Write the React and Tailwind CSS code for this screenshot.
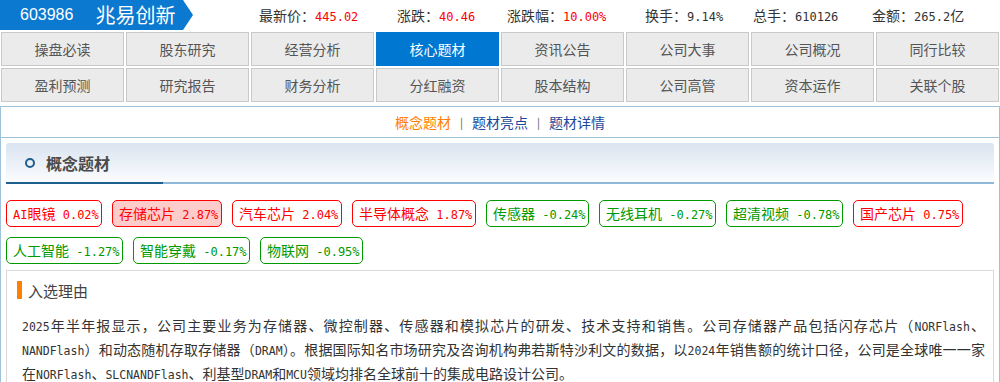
import React from 'react';

const navRows = [
  ['操盘必读', '股东研究', '经营分析', '核心题材', '资讯公告', '公司大事', '公司概况', '同行比较'],
  ['盈利预测', '研究报告', '财务分析', '分红融资', '股本结构', '公司高管', '资本运作', '关联个股'],
];

const stats = [
  { label: '最新价：', value: '445.02', red: true, w: 'w-[138px]' },
  { label: '涨跌：', value: '40.46', red: true, w: 'w-[110px]' },
  { label: '涨跌幅：', value: '10.00%', red: true, w: 'w-[138px]' },
  { label: '换手：', value: '9.14%', w: 'w-[108px]' },
  { label: '总手：', value: '610126', w: 'w-[119px]' },
  { label: '金额：', value: '265.2亿', w: 'w-[110px]' },
];

const tags = [
  { name: 'AI眼镜', pct: '0.02%', up: true, w: 'w-[96px]' },
  { name: '存储芯片', pct: '2.87%', up: true, hot: true, w: 'w-[110px]' },
  { name: '汽车芯片', pct: '2.04%', up: true, w: 'w-[110px]' },
  { name: '半导体概念', pct: '1.87%', up: true, w: 'w-[124px]' },
  { name: '传感器', pct: '-0.24%', w: 'w-[103px]' },
  { name: '无线耳机', pct: '-0.27%', w: 'w-[117px]' },
  { name: '超清视频', pct: '-0.78%', w: 'w-[117px]' },
  { name: '国产芯片', pct: '0.75%', up: true, w: 'w-[110px]' },
  { name: '人工智能', pct: '-1.27%', w: 'w-[117px]' },
  { name: '智能穿戴', pct: '-0.17%', w: 'w-[117px]' },
  { name: '物联网', pct: '-0.95%', w: 'w-[103px]' },
];

const reasonLines = [
  '2025年半年报显示，公司主要业务为存储器、微控制器、传感器和模拟芯片的研发、技术支持和销售。公司存储器产品包括闪存芯片（NORFlash、',
  'NANDFlash）和动态随机存取存储器（DRAM）。根据国际知名市场研究及咨询机构弗若斯特沙利文的数据，以2024年销售额的统计口径，公司是全球唯一一家',
  '在NORFlash、SLCNANDFlash、利基型DRAM和MCU领域均排名全球前十的集成电路设计公司。',
];

// ascii runs get the monospace font, like the original page's SimSun digits
const Mixed = ({ text, monoClass }) => (
  <span>
    {text.split(/([\x20-\x7E]+)/).map((part, i) =>
      /^[\x20-\x7E]+$/.test(part) ? (
        <span key={i} className={monoClass}>{part}</span>
      ) : (
        part
      )
    )}
  </span>
);

const MONO = "font-['DejaVu_Sans_Mono',monospace] text-[12px]";
const MONO_SM = "font-['DejaVu_Sans_Mono',monospace] text-[11.5px]";

const App = () => {
  return (
    <div className="w-[1000px] bg-white font-['Noto_Sans_CJK_SC',sans-serif] text-[#333]">
      {/* Top bar */}
      <div className="flex h-[30px] items-center">
        <div className="flex items-center">
          <div className="flex h-[30px] w-[183px] items-center bg-[#0b79d0] pl-[20px] text-white">
            <span className="font-['Liberation_Sans',sans-serif] text-[16px] leading-none">603986</span>
            <span className="ml-[22px] text-[20px] leading-none">兆易创新</span>
          </div>
          <div className="h-0 w-0 border-y-[15px] border-l-[10px] border-y-transparent border-l-[#0b79d0]" />
        </div>
        <div className="ml-[66px] flex items-center">
          {stats.map(s => (
            <div key={s.label} className={`${s.w} flex items-center text-[14px] leading-none`}>
              <span className="text-[#333]">{s.label}</span>
              <span className={s.red ? 'text-[#ff0000]' : 'text-[#333]'}>
                <Mixed text={s.value} monoClass={MONO} />
              </span>
            </div>
          ))}
        </div>
      </div>

      {/* Tab grid */}
      <div className="grid grid-cols-8 gap-[2px] px-[1px] pt-[2px]">
        {navRows.flat().map(label => {
          const active = label === '核心题材';
          return (
            <div
              key={label}
              className={
                active
                  ? 'flex h-[34px] items-center justify-center border border-[#0078d2] bg-[#0078d2] text-[14px] text-white'
                  : 'flex h-[34px] items-center justify-center border border-[#c9c9c9] bg-[#ebebeb] text-[14px] text-[#555]'
              }
            >
              {label}
            </div>
          );
        })}
      </div>

      {/* Content panel */}
      <div className="mt-[4px] border border-[#9fc2dc]">
        <div className="flex h-[31px] items-center justify-center border-b border-[#9fc2dc] text-[14px]">
          <span className="text-[#ff7e00]">概念题材</span>
          <span className="mx-[9px] text-[11px] text-[#555]">|</span>
          <span className="text-[#1b4a9c]">题材亮点</span>
          <span className="mx-[9px] text-[11px] text-[#555]">|</span>
          <span className="text-[#1b4a9c]">题材详情</span>
        </div>

        <div className="px-[5px] pb-[20px]">
          {/* Section header */}
          <div className="mt-[5px]">
            <div className="flex h-[39px] items-center rounded-t-[3px] bg-gradient-to-b from-[#dae4f0] to-[#fbfcfe] pl-[19px]">
              <span className="h-[10px] w-[10px] rounded-full border-2 border-[#1d5f8e]" />
              <span className="ml-[11px] text-[16px] font-bold text-[#4a4a4a]">概念题材</span>
            </div>
            <div className="flex h-[2px]">
              <div className="w-[157px] bg-[#1d5f8e]" />
              <div className="flex-1 bg-[#8fb9d8]" />
            </div>
          </div>

          {/* Concept tags */}
          <div className="mt-[16px] flex flex-wrap gap-x-[10px] gap-y-[10px]">
            {tags.map(t => (
              <div
                key={t.name}
                className={`${t.w} flex h-[27px] items-center whitespace-nowrap rounded-[5px] border pl-[6px] text-[14px] leading-none ${
                  t.up ? 'border-[#ff0000] text-[#ff0000]' : 'border-[#009900] text-[#009900]'
                } ${t.hot ? 'bg-[#ffcccc]' : 'bg-white'}`}
              >
                <Mixed text={`${t.name} ${t.pct}`} monoClass={MONO} />
              </div>
            ))}
          </div>

          {/* Reason box */}
          <div className="mt-[6px] border border-[#d9d9d9] pb-[10px] pl-[15px] pr-[8px] pt-[10px]">
            <div className="-ml-[5px] flex h-[18px] items-center">
              <span className="h-[18px] w-[5px] bg-[#ff8000]" />
              <span className="ml-[6px] text-[15px] leading-none text-[#444]">入选理由</span>
            </div>
            <div className="mt-[15px] text-[14px] leading-[22px] text-[#333]">
              {reasonLines.map((line, i) => (
                <div
                  key={i}
                  className={i < 2 ? 'whitespace-nowrap text-justify [text-align-last:justify]' : 'whitespace-nowrap'}
                >
                  <Mixed text={line} monoClass={MONO_SM} />
                </div>
              ))}
            </div>
          </div>
        </div>
      </div>
    </div>
  );
};

export default App;
